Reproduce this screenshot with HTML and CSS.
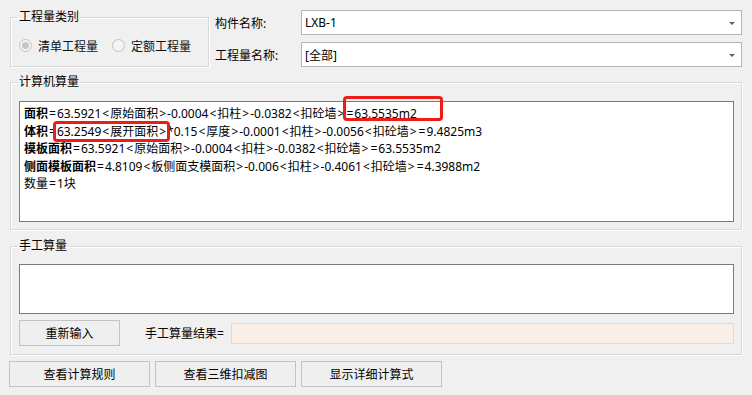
FILE: index.html
```html
<!DOCTYPE html>
<html lang="zh-CN">
<head>
<meta charset="utf-8">
<title>工程量</title>
<link rel="stylesheet" href="styles.css">
</head>
<body>
<div class="app">
  <div class="top">
    <fieldset class="group kind">
      <legend>工程量类别</legend>
      <div class="radios">
        <span class="radio checked"><span class="dot"></span></span><span class="rlabel">清单工程量</span>
        <span class="radio second"></span><span class="rlabel">定额工程量</span>
      </div>
    </fieldset>
    <div class="fields">
      <span class="flabel">构件名称:</span>
      <div class="combo"><span class="ctext">LXB-1</span><span class="arrow"></span></div>
      <span class="flabel">工程量名称:</span>
      <div class="combo"><span class="ctext">[全部]</span><span class="arrow"></span></div>
    </div>
  </div>

  <fieldset class="group calc">
    <legend>计算机算量</legend>
    <div class="output">
      <div class="line"><b>面积</b><i>=</i>63.5921<i>&lt;</i>原始面积<i>&gt;</i>-0.0004<i>&lt;</i>扣柱<i>&gt;</i>-0.0382<i>&lt;</i>扣砼墙<i>&gt;</i><span class="mark m1"><i>=</i>63.5535m2</span></div>
      <div class="line"><b>体积</b><i>=</i><span class="mark m2">63.2549<i>&lt;</i>展开面积<i>&gt;</i></span>*0.15<i>&lt;</i>厚度<i>&gt;</i>-0.0001<i>&lt;</i>扣柱<i>&gt;</i>-0.0056<i>&lt;</i>扣砼墙<i>&gt;</i><i>=</i>9.4825m3</div>
      <div class="line"><b>模板面积</b><i>=</i>63.5921<i>&lt;</i>原始面积<i>&gt;</i>-0.0004<i>&lt;</i>扣柱<i>&gt;</i>-0.0382<i>&lt;</i>扣砼墙<i>&gt;</i><i>=</i>63.5535m2</div>
      <div class="line"><b>侧面模板面积</b><i>=</i>4.8109<i>&lt;</i>板侧面支模面积<i>&gt;</i>-0.006<i>&lt;</i>扣柱<i>&gt;</i>-0.4061<i>&lt;</i>扣砼墙<i>&gt;</i><i>=</i>4.3988m2</div>
      <div class="line">数量<i>=</i>1块</div>
    </div>
  </fieldset>

  <fieldset class="group manual">
    <legend>手工算量</legend>
    <div class="input"></div>
    <div class="mrow">
      <button class="btn reset">重新输入</button>
      <span class="rlab">手工算量结果=</span>
      <div class="result"></div>
    </div>
  </fieldset>

  <div class="actions">
    <button class="btn act">查看计算规则</button>
    <button class="btn act">查看三维扣减图</button>
    <button class="btn act">显示详细计算式</button>
  </div>
</div>
</body>
</html>
```
FILE: styles.css
```css
* { box-sizing: border-box; }
html, body {
  margin: 0;
  padding: 0;
  background: #f0f0f0;
}
body {
  width: 752px;
  height: 395px;
  overflow: hidden;
  font-family: "Noto Sans", "Noto Sans CJK SC", sans-serif;
  font-size: 12px;
  color: #000;
}
.app {
  padding: 9px 10px 0 10px;
}
.group {
  margin: 0;
  padding: 0 7px 0 8px;
  border: 1px solid #d9d9d9;
  box-shadow: inset 1px 1px 0 #fff, 1px 1px 0 #fff;
  min-width: 0;
}
.group legend {
  padding: 0 1px;
  margin-left: -1px;
  line-height: 16px;
  font-size: 12px;
  color: #000;
}
.top {
  display: flex;
  align-items: flex-start;
}
.kind {
  width: 199px;
  height: 58px;
  flex: none;
}
.radios {
  display: flex;
  align-items: center;
  height: 17px;
  margin-top: 12px;
}
.radio {
  width: 13px;
  height: 13px;
  border-radius: 50%;
  border: 1px solid #c2c2c2;
  background: #f4f4f4;
  display: flex;
  align-items: center;
  justify-content: center;
  flex: none;
}
.radio .dot {
  width: 7px;
  height: 7px;
  border-radius: 50%;
  background: #c6c6c6;
}
.radio.second { margin-left: 14px; }
.rlabel {
  margin-left: 6px;
  color: #111;
}
.fields {
  flex: 1;
  margin-left: 6px;
  margin-top: 1px;
  display: grid;
  grid-template-columns: 86px 1fr;
  grid-auto-rows: 25px;
  row-gap: 7px;
  align-items: center;
}
.flabel { color: #000; }
.combo {
  height: 25px;
  border: 1px solid #b4b4b4;
  background: #fff;
  display: flex;
  align-items: center;
  justify-content: space-between;
  padding: 0 6px 0 3px;
}
.arrow {
  width: 0;
  height: 0;
  border-left: 3px solid transparent;
  border-right: 3px solid transparent;
  border-top: 3px solid #5f5f5f;
  margin-top: 2px;
}
.calc {
  margin-top: 7px;
  padding-bottom: 7px;
}
.output {
  margin-top: 11px;
  height: 121px;
  background: #fff;
  border: 1px solid #7a7a7a;
  padding: 3px 4px 0 4px;
  line-height: 17.5px;
  white-space: nowrap;
}
.output b { font-weight: 700; }
.output i {
  font-style: normal;
  padding: 0 1px;
}
.mark {
  position: relative;
}
.mark::after {
  content: "";
  position: absolute;
  border: 3px solid #ee1c16;
  border-radius: 4px;
  pointer-events: none;
}
.m1::after { top: -9px; bottom: 1px; left: -2px; right: -26px; }
.m2::after { top: -2px; bottom: -2px; left: -4px; right: -3px; }
.manual {
  margin-top: 8px;
  padding-bottom: 8px;
}
.input {
  margin-top: 10px;
  height: 50px;
  background: #fff;
  border: 1px solid #7a7a7a;
}
.mrow {
  margin-top: 6px;
  display: flex;
  align-items: center;
}
.btn {
  font-family: inherit;
  font-size: 12px;
  color: #000;
  background: #efefef;
  border: 1px solid #c3c3c3;
  height: 26px;
  padding: 0;
  margin: 0;
}
.reset { width: 101px; flex: none; }
.rlab { margin-left: 25px; }
.result {
  flex: 1;
  margin-left: 7px;
  height: 21px;
  background: #f9efe6;
  border: 1px solid #dcdcdc;
}
.actions {
  margin-top: 6px;
  margin-left: -1px;
  display: flex;
  gap: 5px;
}
.act { width: 141px; }
```
